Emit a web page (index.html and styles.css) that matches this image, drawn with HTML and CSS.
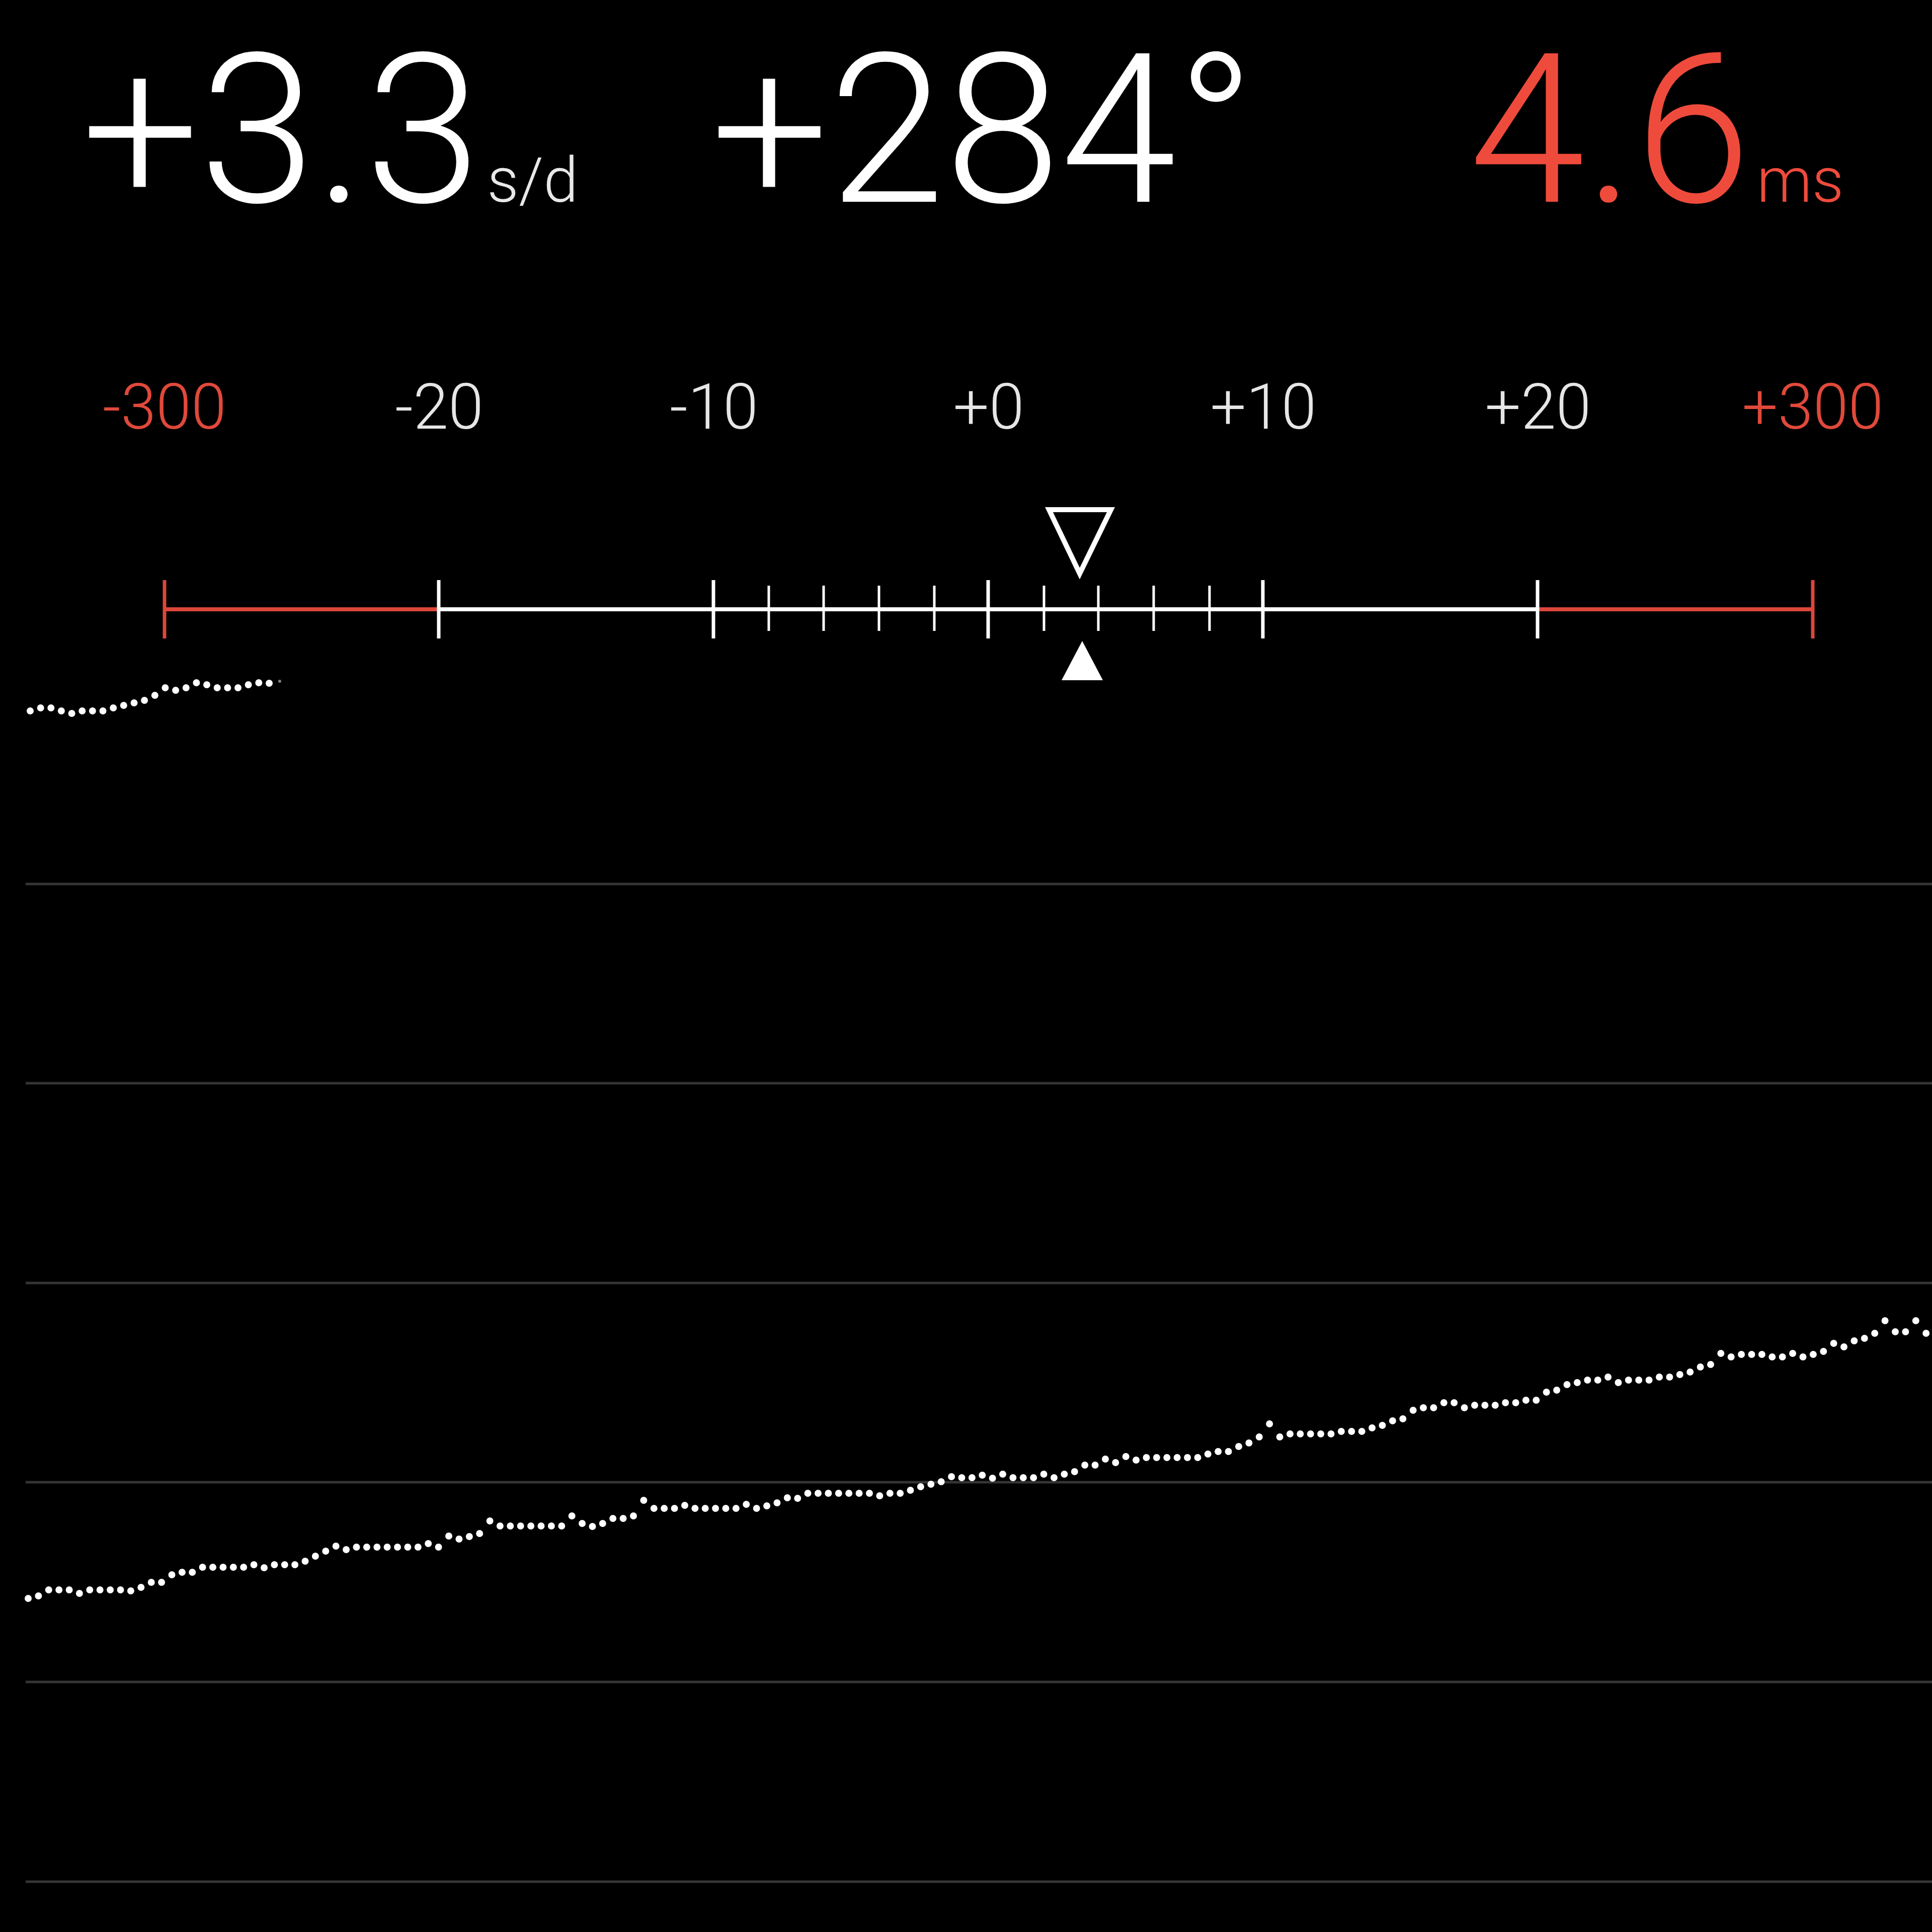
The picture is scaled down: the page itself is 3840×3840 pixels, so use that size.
FILE: index.html
```html
<!DOCTYPE html>
<html lang="en">
<head>
    <meta charset="UTF-8">
    <title>Timegrapher</title>
    <link rel="stylesheet" href="styles.css">
</head>
<body>
<div class="readouts">
    <div class="reading rate"><span class="value">+3.3</span><span class="unit">s/d</span></div>
    <div class="reading amplitude"><span class="value">+284°</span></div>
    <div class="reading beat warn"><span class="value">4.6</span><span class="unit">ms</span></div>
</div>
<div class="scale-labels">
    <span class="warn">-300</span>
    <span>-20</span>
    <span>-10</span>
    <span>+0</span>
    <span>+10</span>
    <span>+20</span>
    <span class="warn">+300</span>
</div>
<svg class="ruler" width="3840" height="380" viewBox="0 980 3840 380">
    <line class="bar warn" x1="327" y1="1211" x2="872" y2="1211"/>
    <line class="bar" x1="872" y1="1211" x2="3056" y2="1211"/>
    <line class="bar warn" x1="3056" y1="1211" x2="3603" y2="1211"/>
    <!-- major ticks -->
    <line class="tick warn" x1="327" y1="1153" x2="327" y2="1269"/>
    <line class="tick" x1="872" y1="1153" x2="872" y2="1269"/>
    <line class="tick" x1="1418" y1="1153" x2="1418" y2="1269"/>
    <line class="tick" x1="1964" y1="1153" x2="1964" y2="1269"/>
    <line class="tick" x1="2510" y1="1153" x2="2510" y2="1269"/>
    <line class="tick" x1="3056" y1="1153" x2="3056" y2="1269"/>
    <line class="tick warn" x1="3603" y1="1153" x2="3603" y2="1269"/>
    <!-- minor ticks -->
    <line class="minor" x1="1528" y1="1164" x2="1528" y2="1254"/>
    <line class="minor" x1="1637" y1="1164" x2="1637" y2="1254"/>
    <line class="minor" x1="1747" y1="1164" x2="1747" y2="1254"/>
    <line class="minor" x1="1857" y1="1164" x2="1857" y2="1254"/>
    <line class="minor" x1="2075" y1="1164" x2="2075" y2="1254"/>
    <line class="minor" x1="2183" y1="1164" x2="2183" y2="1254"/>
    <line class="minor" x1="2293" y1="1164" x2="2293" y2="1254"/>
    <line class="minor" x1="2404" y1="1164" x2="2404" y2="1254"/>
    <!-- markers -->
    <polygon class="marker-avg" points="2085,1013 2208,1013 2146,1140"/>
    <polygon class="marker-now" points="2110,1352 2192,1352 2151,1274"/>
</svg>
<svg class="chart" width="3840" height="2480" viewBox="0 1360 3840 2480">
    <g class="grid">
        <line x1="51" y1="1757" x2="3840" y2="1757"/>
        <line x1="51" y1="2153" x2="3840" y2="2153"/>
        <line x1="51" y1="2550" x2="3840" y2="2550"/>
        <line x1="51" y1="2946" x2="3840" y2="2946"/>
        <line x1="51" y1="3343" x2="3840" y2="3343"/>
        <line x1="51" y1="3740" x2="3840" y2="3740"/>
    </g>
    <g class="dots" id="dots"></g>
</svg>
<script>
    var oDots = document.getElementById('dots');
    var ns = 'http://www.w3.org/2000/svg';

    // older trace, top left
    var trace1 = [1413,1407,1407,1413,1418,1413,1413,1413,1407,1402,1397,1392,1382,1367,1372,1367,1357,1361,1367,1367,1367,1361,1357,1358];
    // current trace
    var trace2 = [3177,3172,3160,3160,3160,3167,3160,3160,3160,3160,3162,3155,3145,3145,3130,3125,3125,3115,3115,3115,
        3115,3115,3110,3116,3110,3110,3110,3103,3093,3083,3073,3080,3075,3075,3075,3075,3075,3075,3075,3068,
        3075,3053,3059,3054,3048,3023,3033,3033,3033,3033,3033,3033,3033,3013,3028,3034,3028,3018,3018,3013,
        2982,2998,2998,2998,2992,2998,2998,2998,2998,2998,2990,2998,2993,2987,2977,2978,2968,2968,2968,2968,
        2968,2968,2968,2973,2968,2968,2962,2955,2950,2945,2935,2937,2937,2932,2938,2930,2937,2937,2937,2930,
        2937,2930,2925,2912,2912,2900,2907,2895,2902,2897,2897,2897,2897,2897,2897,2890,2885,2885,2875,2868,
        2856,2830,2856,2850,2850,2850,2850,2850,2845,2845,2845,2838,2833,2824,2820,2803,2798,2798,2788,2788,
        2798,2793,2793,2793,2788,2788,2783,2783,2767,2763,2752,2748,2743,2743,2737,2748,2743,2743,2743,2737,
        2737,2732,2727,2717,2712,2690,2697,2692,2692,2692,2697,2697,2690,2697,2692,2686,2670,2677,2665,2660,
        2650,2625,2647,2647,2625,2650];

    function drawTrace(data, x0, step) {
        for (var i = 0; i < data.length; i++) {
            var c = document.createElementNS(ns, 'circle');
            c.setAttribute('cx', (x0 + i * step).toFixed(1));
            c.setAttribute('cy', data[i]);
            c.setAttribute('r', 7);
            oDots.appendChild(c);
        }
    }
    drawTrace(trace1, 60, 20.65);
    drawTrace(trace2, 56, 20.39);

    // fading last point of the old trace
    var tail = document.createElementNS(ns, 'circle');
    tail.setAttribute('cx', 556);
    tail.setAttribute('cy', 1354);
    tail.setAttribute('r', 3);
    tail.setAttribute('class', 'tail');
    oDots.appendChild(tail);
</script>
</body>
</html>
```
FILE: styles.css
```css
*{
    padding: 0;
    margin: 0;
}
body{
    width: 3840px;
    height: 3840px;
    overflow: hidden;
    background: #000;
    color: #fff;
    font-family: Roboto, "Helvetica Neue", "Liberation Sans", sans-serif;
    font-weight: 300;
}
.readouts{
    display: grid;
    grid-template-columns: 1251px 1507px auto;
    align-items: baseline;
    padding: 52px 0 0 162px;
    height: 410px;
}
.reading{
    display: flex;
    align-items: baseline;
    line-height: 1;
    height: 410px;
}
.reading .value{
    font-size: 415px;
}
.reading .unit{
    font-size: 124px;
    margin-left: 12px;
    color: #e8e8e8;
}
.warn{
    color: #ef4b3c;
}
.reading.warn .unit{
    color: #ef4b3c;
}
.scale-labels{
    display: grid;
    grid-template-columns: repeat(7, 546px);
    margin-top: 284px;
    padding-left: 54px;
    font-size: 126px;
    line-height: 1;
    text-align: center;
    color: #e6e6e6;
}
.scale-labels .warn{
    color: #e0493b;
}
.ruler{
    display: block;
    margin-top: 108px;
    overflow: visible;
}
.ruler line{
    stroke: #fff;
}
.ruler .bar{
    stroke-width: 8;
}
.ruler .tick{
    stroke-width: 7;
}
.ruler .minor{
    stroke-width: 5;
}
.ruler .warn{
    stroke: #dc473a;
}
.marker-avg{
    fill: none;
    stroke: #fff;
    stroke-width: 10;
}
.marker-now{
    fill: #fff;
}
.chart{
    display: block;
    overflow: visible;
}
.grid line{
    stroke: #353535;
    stroke-width: 5;
}
.dots circle{
    fill: #fff;
}
.dots .tail{
    opacity: 0.5;
}
```
